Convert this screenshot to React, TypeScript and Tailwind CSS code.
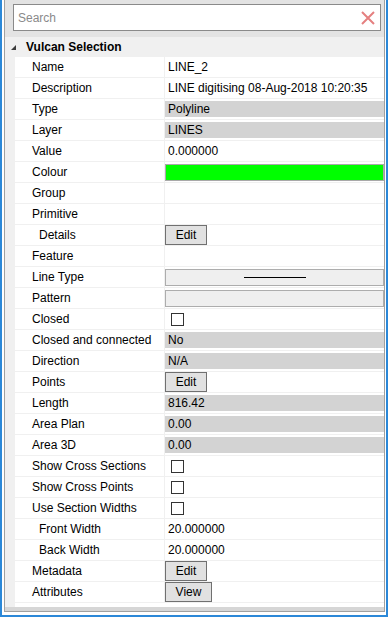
import React from 'react'

type Kind = 'text' | 'gray' | 'colour' | 'button' | 'check' | 'linetype' | 'pattern' | 'empty'

interface Prop {
    label: string
    kind: Kind
    value?: string
    indent?: boolean
}

const props: Prop[] = [
    { label: 'Name', kind: 'text', value: 'LINE_2' },
    { label: 'Description', kind: 'text', value: 'LINE digitising 08-Aug-2018 10:20:35' },
    { label: 'Type', kind: 'gray', value: 'Polyline' },
    { label: 'Layer', kind: 'gray', value: 'LINES' },
    { label: 'Value', kind: 'text', value: '0.000000' },
    { label: 'Colour', kind: 'colour' },
    { label: 'Group', kind: 'empty' },
    { label: 'Primitive', kind: 'empty' },
    { label: 'Details', kind: 'button', value: 'Edit', indent: true },
    { label: 'Feature', kind: 'empty' },
    { label: 'Line Type', kind: 'linetype' },
    { label: 'Pattern', kind: 'pattern' },
    { label: 'Closed', kind: 'check' },
    { label: 'Closed and connected', kind: 'gray', value: 'No' },
    { label: 'Direction', kind: 'gray', value: 'N/A' },
    { label: 'Points', kind: 'button', value: 'Edit' },
    { label: 'Length', kind: 'gray', value: '816.42' },
    { label: 'Area Plan', kind: 'gray', value: '0.00' },
    { label: 'Area 3D', kind: 'gray', value: '0.00' },
    { label: 'Show Cross Sections', kind: 'check' },
    { label: 'Show Cross Points', kind: 'check' },
    { label: 'Use Section Widths', kind: 'check' },
    { label: 'Front Width', kind: 'text', value: '20.000000', indent: true },
    { label: 'Back Width', kind: 'text', value: '20.000000', indent: true },
    { label: 'Metadata', kind: 'button', value: 'Edit' },
    { label: 'Attributes', kind: 'button', value: 'View' },
]

function ValueCell({ p }: { p: Prop }) {
    switch (p.kind) {
        case 'text':
            return <span className="pl-[3px] whitespace-nowrap">{p.value}</span>
        case 'gray':
            return (
                <div className="flex h-[16px] w-full items-center bg-[#d3d3d3] pl-[3px]">{p.value}</div>
            )
        case 'colour':
            return <div className="h-[17px] w-full border border-[#a9a9a9] bg-[#00ff00]" />
        case 'button':
            return (
                <div
                    className={`flex h-[20px] items-center justify-center border border-[#707070] bg-[#e1e1e1] ${
                        p.value === 'View' ? 'w-[47px]' : 'w-[42px]'
                    }`}
                >
                    {p.value}
                </div>
            )
        case 'check':
            return <div className="ml-[6px] h-[13px] w-[13px] border border-[#333333] bg-white" />
        case 'linetype':
            return (
                <div className="flex h-[17px] w-full items-center justify-center border border-[#adadad] bg-[#efefef]">
                    <div className="h-px w-[62px] bg-black" />
                </div>
            )
        case 'pattern':
            return <div className="h-[17px] w-full border border-[#adadad] bg-[#efefef]" />
        default:
            return null
    }
}

export default function App() {
    return (
        <div
            className="h-[617px] w-[390px] bg-white text-[12px] text-black"
            style={{ fontFamily: '"Liberation Sans", Arial, sans-serif' }}
        >
            <div className="h-[617px] w-[388px] border-x-2 border-b-2 border-[#2b88d8] pb-[3px] pl-[2px] pr-[1px]">
                <div className="flex h-[612px] flex-col border-x border-b border-[#a0a0a0]">
                    {/* search bar */}
                    <div className="h-[37px] bg-[#e3e3e3] pl-[8px] pr-[3px] pt-[4px]">
                        <div className="flex h-[27px] items-center border border-[#8a8a8a] bg-white pl-[4px] pr-[5px]">
                            <span className="flex-1 text-[#8a8a8a]">Search</span>
                            <svg width="14" height="14" viewBox="0 0 14 14">
                                <path d="M1 1 L13 13 M13 1 L1 13" stroke="#e58080" strokeWidth="2" />
                            </svg>
                        </div>
                    </div>

                    {/* category header */}
                    <div className="flex h-[20px] items-center bg-[#f0f0f0]">
                        <svg className="ml-[6px]" width="5" height="5" viewBox="0 0 5 5">
                            <polygon points="0,5 5,5 5,0" fill="#3c3c3c" />
                        </svg>
                        <span className="ml-[10px] font-bold">Vulcan Selection</span>
                    </div>

                    {/* grid */}
                    <div className="flex">
                        <div className="w-[10px] bg-[#f0f0f0]" />
                        <div className="flex-1 bg-white pb-[4px]">
                            {props.map((p) => (
                                <div key={p.label} className="flex h-[21px] border-b border-[#f0f0f0]">
                                    <div
                                        className={`flex w-[150px] items-center whitespace-nowrap border-r border-[#f0f0f0] ${
                                            p.indent ? 'pl-[24px]' : 'pl-[17px]'
                                        }`}
                                    >
                                        {p.label}
                                    </div>
                                    <div className="flex flex-1 items-center">
                                        <ValueCell p={p} />
                                    </div>
                                </div>
                            ))}
                        </div>
                    </div>

                    <div className="h-[4px] bg-[#d6d6d6]" />
                </div>
            </div>
        </div>
    )
}
